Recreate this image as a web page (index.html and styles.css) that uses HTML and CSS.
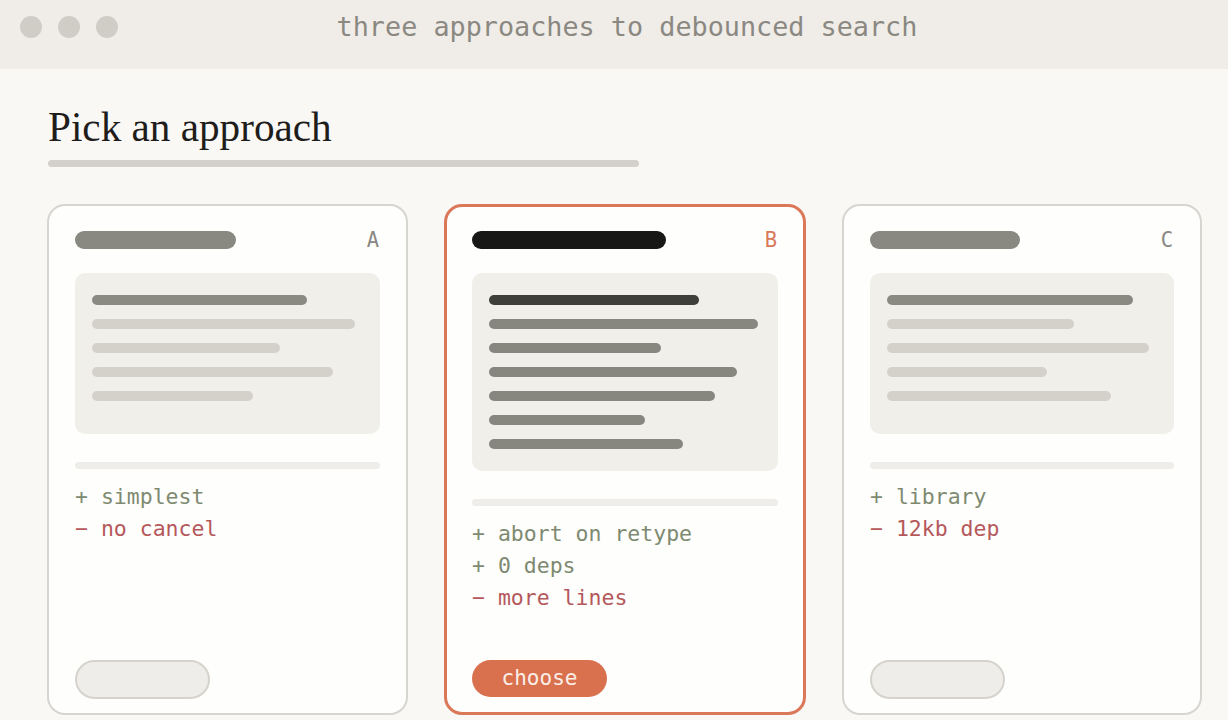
FILE: index.html
```html
<!DOCTYPE html>
<html lang="en">
<head>
<meta charset="utf-8">
<title>three approaches to debounced search</title>
<link rel="stylesheet" href="styles.css">
</head>
<body>
<div class="window">
  <header class="titlebar">
    <div class="dots"><span class="dot"></span><span class="dot"></span><span class="dot"></span></div>
    <div class="title">three approaches to debounced search</div>
    <div class="spacer"></div>
  </header>

  <main class="content">
    <h1 class="heading">Pick an approach</h1>
    <div class="heading-rule"></div>

    <section class="cards">
      <article class="card">
        <div class="card-head">
          <span class="pill pill-muted" style="width:161px"></span>
          <span class="tag">A</span>
        </div>
        <div class="snippet snippet-short">
          <span class="ln ln-key" style="width:215px"></span>
          <span class="ln ln-soft" style="width:263px"></span>
          <span class="ln ln-soft" style="width:188px"></span>
          <span class="ln ln-soft" style="width:241px"></span>
          <span class="ln ln-soft" style="width:161px"></span>
        </div>
        <div class="rule"></div>
        <ul class="notes">
          <li class="pro">+ simplest</li>
          <li class="con">− no cancel</li>
        </ul>
        <button class="btn btn-ghost" type="button"></button>
      </article>

      <article class="card card-picked">
        <div class="card-head">
          <span class="pill pill-strong" style="width:194px"></span>
          <span class="tag tag-picked">B</span>
        </div>
        <div class="snippet">
          <span class="ln ln-dark" style="width:210px"></span>
          <span class="ln ln-mid" style="width:269px"></span>
          <span class="ln ln-mid" style="width:172px"></span>
          <span class="ln ln-mid" style="width:248px"></span>
          <span class="ln ln-mid" style="width:226px"></span>
          <span class="ln ln-mid" style="width:156px"></span>
          <span class="ln ln-mid" style="width:194px"></span>
        </div>
        <div class="rule"></div>
        <ul class="notes">
          <li class="pro">+ abort on retype</li>
          <li class="pro">+ 0 deps</li>
          <li class="con">− more lines</li>
        </ul>
        <button class="btn btn-choose" type="button">choose</button>
      </article>

      <article class="card">
        <div class="card-head">
          <span class="pill pill-muted" style="width:150px"></span>
          <span class="tag">C</span>
        </div>
        <div class="snippet snippet-short">
          <span class="ln ln-key" style="width:246px"></span>
          <span class="ln ln-soft" style="width:187px"></span>
          <span class="ln ln-soft" style="width:262px"></span>
          <span class="ln ln-soft" style="width:160px"></span>
          <span class="ln ln-soft" style="width:224px"></span>
        </div>
        <div class="rule"></div>
        <ul class="notes">
          <li class="pro">+ library</li>
          <li class="con">− 12kb dep</li>
        </ul>
        <button class="btn btn-ghost" type="button"></button>
      </article>
    </section>
  </main>
</div>
</body>
</html>
```

FILE: styles.css
```css
* {
  box-sizing: border-box;
}

html, body {
  margin: 0;
  padding: 0;
  height: 100%;
}

body {
  background: #f9f8f5;
  font-family: "DejaVu Sans Mono", "Liberation Mono", monospace;
  overflow: hidden;
}

.window {
  width: 1228px;
  height: 720px;
  display: flex;
  flex-direction: column;
}

/* title bar */
.titlebar {
  height: 69px;
  flex: none;
  background: #f0ede8;
  display: flex;
  align-items: center;
  padding-bottom: 15px;
}

.dots {
  display: flex;
  gap: 16px;
  padding-left: 20px;
  width: 118px;
}

.dot {
  width: 22px;
  height: 22px;
  border-radius: 50%;
  background: #d0cdc7;
}

.title {
  flex: 1;
  text-align: center;
  font-size: 26.8px;
  line-height: 32px;
  color: #8b8882;
}

.spacer {
  width: 92px;
}

/* page body */
.content {
  flex: 1;
  padding: 0 25px 0 47px;
}

.heading {
  margin: 35px 0 0 1px;
  font-family: "Liberation Serif", "Times New Roman", serif;
  font-weight: 400;
  font-size: 41.2px;
  line-height: 46px;
  color: #1e1d1b;
}

.heading-rule {
  width: 591px;
  height: 7px;
  margin: 10px 0 0 1px;
  border-radius: 4px;
  background: #d3d1ca;
}

.cards {
  margin-top: 37px;
  display: grid;
  grid-template-columns: 361px 362px 360px;
  column-gap: 36px;
}

/* option card */
.card {
  height: 511px;
  display: flex;
  flex-direction: column;
  padding: 25px 26px 14px;
  border: 2px solid #d7d5d0;
  border-radius: 18px;
  background: #fefefd;
}

.card-picked {
  border: 3px solid #da7859;
  padding: 24px 25px 13px;
}

.card-head {
  height: 18px;
  display: flex;
  align-items: center;
  justify-content: space-between;
}

.pill {
  height: 18px;
  border-radius: 9px;
}

.pill-muted {
  background: #898982;
}

.pill-strong {
  background: #171715;
}

.tag {
  font-size: 20.5px;
  line-height: 18px;
  color: #8b8883;
  margin-right: 1px;
}

.tag-picked {
  color: #d9785a;
}

/* code preview */
.snippet {
  margin-top: 24px;
  padding: 22px 17px;
  border-radius: 10px;
  background: #f1efea;
  display: flex;
  flex-direction: column;
  align-items: flex-start;
  gap: 14px;
}

.snippet-short {
  min-height: 161px;
}

.ln {
  height: 10px;
  border-radius: 5px;
}

.ln-key {
  background: #8a8a83;
}

.ln-soft {
  background: #d4d1ca;
}

.ln-dark {
  background: #3e3e3a;
}

.ln-mid {
  background: #87877f;
}

.rule {
  margin-top: 28px;
  height: 7px;
  border-radius: 4px;
  background: #efede9;
}

.notes {
  list-style: none;
  margin: 12px 0 0;
  padding: 0;
  font-size: 21.5px;
  line-height: 32px;
}

.pro {
  color: #7e8a70;
}

.con {
  color: #b5585b;
}

/* action */
.btn {
  margin-top: auto;
  width: 135px;
  height: 39px;
  border-radius: 20px;
  font-family: "DejaVu Sans Mono", "Liberation Mono", monospace;
  font-size: 21px;
  padding: 0;
}

.btn-ghost {
  background: #efede9;
  border: 2px solid #d6d3cd;
}

.btn-choose {
  background: #d9714f;
  border: none;
  color: #fbefe8;
  height: 37px;
  margin-bottom: 2px;
  padding-bottom: 1px;
}
```
